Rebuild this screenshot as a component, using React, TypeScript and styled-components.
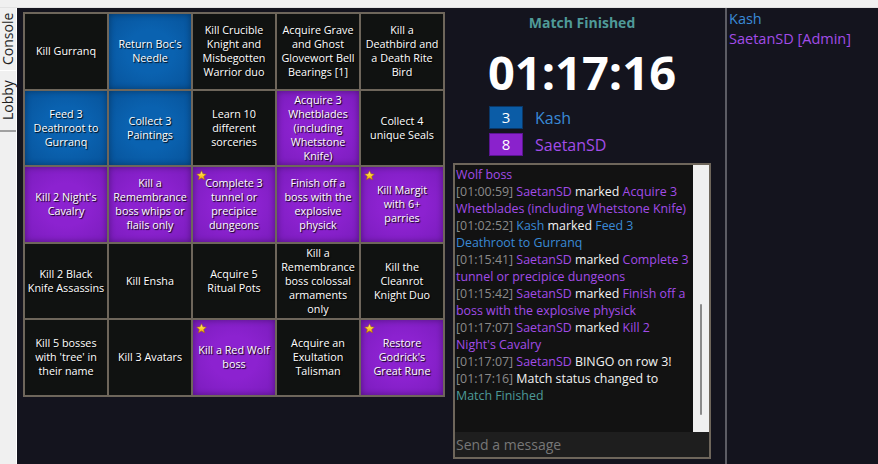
import React from 'react'
import styled, { createGlobalStyle } from 'styled-components'

type Mark = 'none' | 'blue' | 'purple'

interface Cell {
  text: string
  mark: Mark
  star?: boolean
}

// line breaks follow the board as it is drawn in the client
const cells: Cell[] = [
  { text: 'Kill Gurranq', mark: 'none' },
  { text: "Return Boc's\nNeedle", mark: 'blue' },
  { text: 'Kill Crucible\nKnight and\nMisbegotten\nWarrior duo', mark: 'none' },
  { text: 'Acquire Grave\nand Ghost\nGlovewort Bell\nBearings [1]', mark: 'none' },
  { text: 'Kill a\nDeathbird and\na Death Rite\nBird', mark: 'none' },
  { text: 'Feed 3\nDeathroot to\nGurranq', mark: 'blue' },
  { text: 'Collect 3\nPaintings', mark: 'blue' },
  { text: 'Learn 10\ndifferent\nsorceries', mark: 'none' },
  { text: 'Acquire 3\nWhetblades\n(including\nWhetstone\nKnife)', mark: 'purple' },
  { text: 'Collect 4\nunique Seals', mark: 'none' },
  { text: "Kill 2 Night's\nCavalry", mark: 'purple' },
  { text: 'Kill a\nRemembrance\nboss whips or\nflails only', mark: 'purple' },
  { text: 'Complete 3\ntunnel or\nprecipice\ndungeons', mark: 'purple', star: true },
  { text: 'Finish off a\nboss with the\nexplosive\nphysick', mark: 'purple' },
  { text: 'Kill Margit\nwith 6+\nparries', mark: 'purple', star: true },
  { text: 'Kill 2 Black\nKnife Assassins', mark: 'none' },
  { text: 'Kill Ensha', mark: 'none' },
  { text: 'Acquire 5\nRitual Pots', mark: 'none' },
  { text: 'Kill a\nRemembrance\nboss colossal\narmaments\nonly', mark: 'none' },
  { text: 'Kill the\nCleanrot\nKnight Duo', mark: 'none' },
  { text: "Kill 5 bosses\nwith 'tree' in\ntheir name", mark: 'none' },
  { text: 'Kill 3 Avatars', mark: 'none' },
  { text: 'Kill a Red Wolf\nboss', mark: 'purple', star: true },
  { text: 'Acquire an\nExultation\nTalisman', mark: 'none' },
  { text: "Restore\nGodrick's\nGreat Rune", mark: 'purple', star: true },
]

type Tone = 'time' | 'kash' | 'saetan' | 'plain' | 'status'

const log: [Tone, string][][] = [
  [['time', '[00:58:31]'], ['saetan', ' SaetanSD'], ['plain', ' marked'], ['saetan', ' Kill a Red Wolf boss']],
  [['time', '[01:00:59]'], ['saetan', ' SaetanSD'], ['plain', ' marked'], ['saetan', ' Acquire 3 Whetblades (including Whetstone Knife)']],
  [['time', '[01:02:52]'], ['kash', ' Kash'], ['plain', ' marked'], ['kash', ' Feed 3 Deathroot to Gurranq']],
  [['time', '[01:15:41]'], ['saetan', ' SaetanSD'], ['plain', ' marked'], ['saetan', ' Complete 3 tunnel or precipice dungeons']],
  [['time', '[01:15:42]'], ['saetan', ' SaetanSD'], ['plain', ' marked'], ['saetan', ' Finish off a boss with the explosive physick']],
  [['time', '[01:17:07]'], ['saetan', ' SaetanSD'], ['plain', ' marked'], ['saetan', " Kill 2 Night's Cavalry"]],
  [['time', '[01:17:07]'], ['saetan', ' SaetanSD'], ['plain', ' BINGO on row 3!']],
  [['time', '[01:17:16]'], ['plain', ' Match status changed to'], ['status', ' Match Finished']],
]

const toneColor: Record<Tone, string> = {
  time: '#8b8b8b',
  kash: '#3a8ad6',
  saetan: '#a24ce8',
  plain: '#f2f2f2',
  status: '#4d9a98',
}

function Star() {
  return (
    <StarIcon viewBox="0 0 24 24">
      <defs>
        <linearGradient id="gold" x1="0" y1="0" x2="0" y2="1">
          <stop offset="0" stopColor="#fff2a0" />
          <stop offset="0.5" stopColor="#ffd22e" />
          <stop offset="1" stopColor="#e9a10a" />
        </linearGradient>
      </defs>
      <polygon
        points="12,1.5 15.1,8.4 22.5,9.1 16.9,14 18.6,21.4 12,17.5 5.4,21.4 7.1,14 1.5,9.1 8.9,8.4"
        fill="url(#gold)"
        stroke="#a36b00"
        strokeWidth="1.2"
        strokeLinejoin="round"
      />
    </StarIcon>
  )
}

export default function App() {
  return (
    <>
      <GlobalStyle />
      <Page>
        <TopStrip />
        <Body>
          <SideTabs>
            <Tab $h={63}>Console</Tab>
            <Tab $h={61}>Lobby</Tab>
          </SideTabs>
          <Main>
            <BoardArea>
              <Board>
                {cells.map((c, i) => (
                  <Square key={i} $mark={c.mark}>
                    {c.star && <Star />}
                    <span>{c.text}</span>
                  </Square>
                ))}
              </Board>
            </BoardArea>
            <Center>
              <Status>Match Finished</Status>
              <Timer>01:17:16</Timer>
              <Scores>
                <ScoreRow>
                  <ScoreBox $team="blue">3</ScoreBox>
                  <ScoreName $team="blue">Kash</ScoreName>
                </ScoreRow>
                <ScoreRow>
                  <ScoreBox $team="purple">8</ScoreBox>
                  <ScoreName $team="purple">SaetanSD</ScoreName>
                </ScoreRow>
              </Scores>
              <Chat>
                <LogRow>
                  <Log>
                    {log.map((msg, i) => (
                      <Line key={i}>
                        {msg.map(([tone, text], j) => (
                          <Part key={j} $tone={tone}>
                            {text}
                          </Part>
                        ))}
                      </Line>
                    ))}
                  </Log>
                  <Track>
                    <Thumb />
                  </Track>
                </LogRow>
                <Input placeholder="Send a message" />
              </Chat>
            </Center>
            <Players>
              <Player $team="blue">Kash</Player>
              <Player $team="purple">SaetanSD [Admin]</Player>
            </Players>
          </Main>
        </Body>
      </Page>
    </>
  )
}

const GlobalStyle = createGlobalStyle`
  html, body {
    margin: 0;
    padding: 0;
    background: #f0f0f0;
    overflow: hidden;
  }
  * {
    box-sizing: border-box;
  }
`

const Page = styled.div`
  width: 878px;
  height: 464px;
  display: flex;
  flex-direction: column;
  font-family: 'Open Sans', 'Noto Sans', sans-serif;
`

const TopStrip = styled.div`
  height: 8px;
  background: #f0f0f0;
  border-bottom: 1px solid #e2e2e2;
`

const Body = styled.div`
  flex: 1;
  display: flex;
  min-height: 0;
`

const SideTabs = styled.div`
  width: 17px;
  background: #f0f0f0;
  border-right: 1px solid #ffffff;
  display: flex;
  flex-direction: column;
`

const Tab = styled.div<{ $h: number }>`
  height: ${(p) => p.$h}px;
  writing-mode: vertical-rl;
  transform: rotate(180deg);
  display: flex;
  align-items: center;
  justify-content: center;
  font-size: 14px;
  color: #1e1e1e;
  line-height: 16px;
  &:first-child {
    border-top: 1px solid #ffffff;
  }
  &:last-child {
    border-top: 2px solid #a0a0a0;
  }
`

const Main = styled.div`
  flex: 1;
  display: flex;
  background: #14141e;
`

const BoardArea = styled.div`
  padding: 4px 0 0 6px;
`

const Board = styled.div`
  width: 422px;
  display: grid;
  grid-template-columns: repeat(5, 82px);
  grid-template-rows: repeat(5, 74.5px);
  gap: 2px;
  padding: 2px;
  background: #6e665b;
`

const markBg: Record<Mark, string> = {
  none: '#101211',
  blue: 'radial-gradient(ellipse at center, #0a62b0 40%, #07539a 100%)',
  purple: 'radial-gradient(ellipse at center, #8c22d0 40%, #7a1cbc 100%)',
}

const Square = styled.div<{ $mark: Mark }>`
  position: relative;
  background: ${(p) => markBg[p.$mark]};
  box-shadow: ${(p) => (p.$mark === 'none' ? 'none' : 'inset 0 0 6px rgba(0, 0, 0, 0.35)')};
  display: flex;
  align-items: center;
  justify-content: center;
  text-align: center;
  white-space: pre;
  padding: 0 2px;
  color: #ffffff;
  font-size: 10.8px;
  line-height: 14px;
  text-shadow: 1px 1px 1px #000000;
`

const StarIcon = styled.svg`
  position: absolute;
  top: 3px;
  left: 3px;
  width: 11px;
  height: 11px;
`

const Center = styled.div`
  width: 258px;
  margin-left: 8px;
  padding-top: 5px;
  display: flex;
  flex-direction: column;
`

const Status = styled.div`
  text-align: center;
  font-weight: 700;
  font-size: 14px;
  line-height: 20px;
  color: #4f9a98;
`

const Timer = styled.div`
  margin-top: 11px;
  text-align: center;
  font-weight: 700;
  font-size: 47px;
  line-height: 56px;
  color: #ffffff;
`

const Scores = styled.div`
  margin-top: 6px;
  padding-left: 36px;
  display: flex;
  flex-direction: column;
  gap: 4px;
`

const ScoreRow = styled.div`
  display: flex;
  align-items: center;
`

const teamColor = {
  blue: { box: '#0b5ca6', edge: '#0a3868', text: '#3a8ad6' },
  purple: { box: '#8a22cc', edge: '#5a1592', text: '#a24ce8' },
}

type Team = keyof typeof teamColor

const ScoreBox = styled.div<{ $team: Team }>`
  width: 34px;
  height: 23px;
  background: ${(p) => teamColor[p.$team].box};
  border: 1px solid ${(p) => teamColor[p.$team].edge};
  color: #ffffff;
  font-size: 15px;
  line-height: 21px;
  text-align: center;
`

const ScoreName = styled.div<{ $team: Team }>`
  margin-left: 12px;
  font-size: 16px;
  color: ${(p) => teamColor[p.$team].text};
`

const Chat = styled.div`
  margin-top: 7px;
  border: 2px solid #6e665b;
  display: flex;
  flex-direction: column;
`

const LogRow = styled.div`
  height: 267px;
  display: flex;
  background: #121212;
`

const Log = styled.div`
  flex: 1;
  overflow: hidden;
  display: flex;
  flex-direction: column;
  justify-content: flex-end;
  padding: 0 2px 28px 1px;
  font-size: 12.4px;
  line-height: 17px;
`

const Line = styled.div``

const Part = styled.span<{ $tone: Tone }>`
  color: ${(p) => toneColor[p.$tone]};
`

const Track = styled.div`
  width: 16px;
  background: #f0f0f0;
  display: flex;
  justify-content: center;
  padding-top: 139px;
`

const Thumb = styled.div`
  width: 2px;
  height: 111px;
  border-radius: 1px;
  background: #8a8a8a;
`

const Input = styled.input`
  height: 25px;
  border: none;
  outline: none;
  background: #1e1e1e;
  color: #ffffff;
  padding: 0 1px;
  font-family: 'Open Sans', 'Noto Sans', sans-serif;
  font-size: 14px;
  &::placeholder {
    color: #777777;
  }
`

const Players = styled.div`
  flex: 1;
  margin-left: 14px;
  border-left: 2px solid #5c5c64;
  padding: 1px 0 0 2px;
`

const Player = styled.div<{ $team: Team }>`
  font-size: 14.5px;
  line-height: 20px;
  color: ${(p) => teamColor[p.$team].text};
`
